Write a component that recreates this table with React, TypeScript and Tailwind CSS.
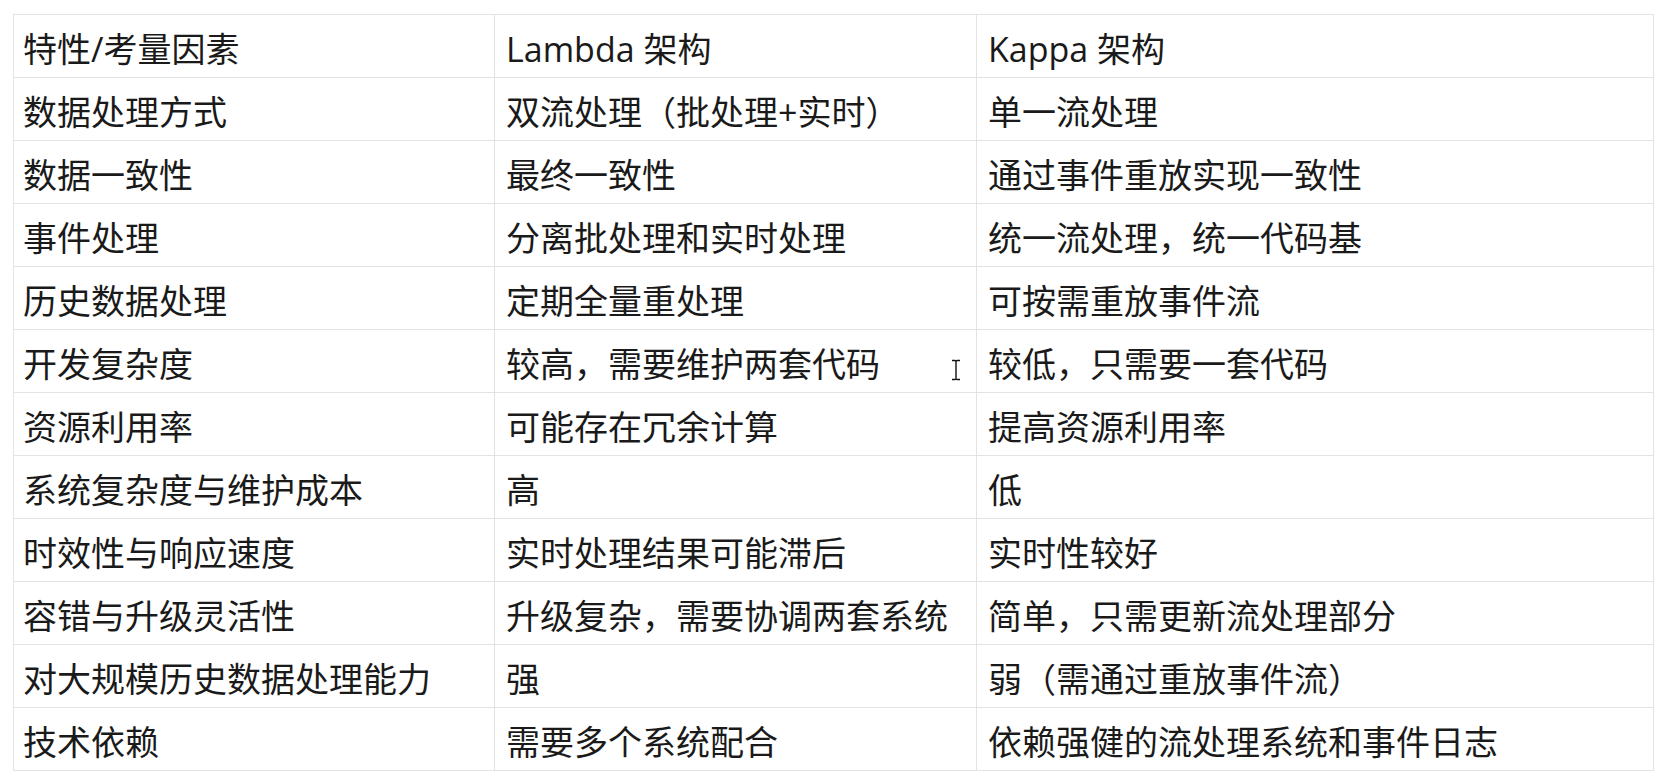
import React from "react";

const rows: [string, string, string][] = [
  ["特性/考量因素", "Lambda 架构", "Kappa 架构"],
  ["数据处理方式", "双流处理（批处理+实时）", "单一流处理"],
  ["数据一致性", "最终一致性", "通过事件重放实现一致性"],
  ["事件处理", "分离批处理和实时处理", "统一流处理，统一代码基"],
  ["历史数据处理", "定期全量重处理", "可按需重放事件流"],
  ["开发复杂度", "较高，需要维护两套代码", "较低，只需要一套代码"],
  ["资源利用率", "可能存在冗余计算", "提高资源利用率"],
  ["系统复杂度与维护成本", "高", "低"],
  ["时效性与响应速度", "实时处理结果可能滞后", "实时性较好"],
  ["容错与升级灵活性", "升级复杂，需要协调两套系统", "简单，只需更新流处理部分"],
  ["对大规模历史数据处理能力", "强", "弱（需通过重放事件流）"],
  ["技术依赖", "需要多个系统配合", "依赖强健的流处理系统和事件日志"],
];

function T({ s }: { s: string }) {
  const parts = s.split(/([（）])/);
  return (
    <>
      {parts.map((p, i) =>
        p === "（" || p === "）" ? (
          <span key={i} className="font-['Noto_Sans_CJK_JP',sans-serif]">
            {p}
          </span>
        ) : (
          <React.Fragment key={i}>{p}</React.Fragment>
        )
      )}
    </>
  );
}

export default function App() {
  return (
    <div
      className="relative w-[1669px] h-[782px] bg-white pt-[14px] pl-[13px] text-[#1a1a1a] [text-spacing-trim:space-all]"
      style={{ fontFamily: '"Open Sans", "Noto Sans CJK SC", sans-serif' }}
    >
      <div className="w-[1641px] border-l border-t border-r border-[#e3e3e3]">
        {rows.map((r, i) => (
          <div key={i} className="flex h-[63px] border-b border-[#e3e3e3]">
            <div className="w-[481px] border-r border-[#e3e3e3] flex items-center pl-[9px] pt-[5px] text-[34px] leading-none whitespace-nowrap">
              <T s={r[0]} />
            </div>
            <div className="w-[482px] border-r border-[#e3e3e3] flex items-center pl-[11px] pt-[5px] text-[34px] leading-none whitespace-nowrap">
              <T s={r[1]} />
            </div>
            <div className="flex-1 flex items-center pl-[11px] pt-[5px] text-[34px] leading-none whitespace-nowrap">
              <T s={r[2]} />
            </div>
          </div>
        ))}
      </div>
      <svg
        className="absolute left-[950px] top-[359px]"
        width="12"
        height="22"
        viewBox="0 0 12 22"
      >
        <path d="M2 1.5h3M7 1.5h3M6 2v18M2 20.5h3M7 20.5h3M5 1.5l1 0.5l1-0.5M5 20.5l1-0.5l1 0.5" stroke="#111" strokeWidth="1.4" fill="none" />
      </svg>
    </div>
  );
}
